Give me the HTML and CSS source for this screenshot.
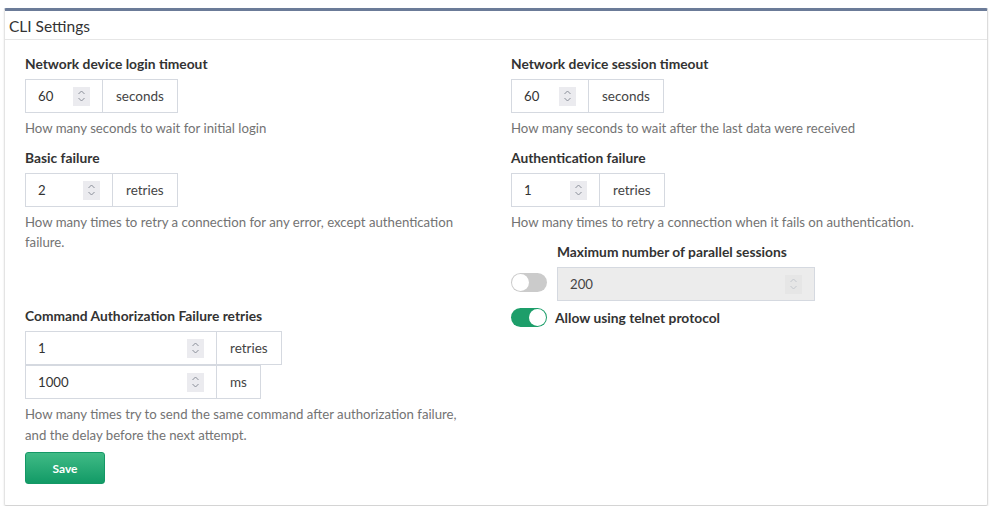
FILE: index.html
```html
<!DOCTYPE html>
<html>
<head>
<meta charset="utf-8">
<link rel="stylesheet" href="styles.css">
</head>
<body>
<div class="card">
  <div class="card-header">CLI Settings</div>
  <div class="card-body">
    <div class="col">
      <div class="field">
        <div class="label">Network device login timeout</div>
        <div class="igroup">
          <div class="num w78"><span>60</span><span class="spin"><svg width="9" height="14" viewBox="0 0 9 14"><path d="M1.5 5 L4.5 2 L7.5 5 M1.5 9 L4.5 12 L7.5 9" fill="none" stroke="#8a8f99" stroke-width="1"/></svg></span></div>
          <div class="addon">seconds</div>
        </div>
        <div class="help">How many seconds to wait for initial login</div>
      </div>
      <div class="field">
        <div class="label">Basic failure</div>
        <div class="igroup">
          <div class="num w88"><span>2</span><span class="spin"><svg width="9" height="14" viewBox="0 0 9 14"><path d="M1.5 5 L4.5 2 L7.5 5 M1.5 9 L4.5 12 L7.5 9" fill="none" stroke="#8a8f99" stroke-width="1"/></svg></span></div>
          <div class="addon">retries</div>
        </div>
        <div class="help">How many times to retry a connection for any error, except authentication failure.</div>
      </div>
      <div class="field spaced">
        <div class="label">Command Authorization Failure retries</div>
        <div class="igroup">
          <div class="num w192"><span>1</span><span class="spin"><svg width="9" height="14" viewBox="0 0 9 14"><path d="M1.5 5 L4.5 2 L7.5 5 M1.5 9 L4.5 12 L7.5 9" fill="none" stroke="#8a8f99" stroke-width="1"/></svg></span></div>
          <div class="addon">retries</div>
        </div>
        <div class="igroup">
          <div class="num w192"><span>1000</span><span class="spin"><svg width="9" height="14" viewBox="0 0 9 14"><path d="M1.5 5 L4.5 2 L7.5 5 M1.5 9 L4.5 12 L7.5 9" fill="none" stroke="#8a8f99" stroke-width="1"/></svg></span></div>
          <div class="addon">ms</div>
        </div>
        <div class="help last">How many times try to send the same command after authorization failure, and the delay before the next attempt.</div>
        <button class="btn">Save</button>
      </div>
    </div>
    <div class="col">
      <div class="field">
        <div class="label">Network device session timeout</div>
        <div class="igroup">
          <div class="num w78"><span>60</span><span class="spin"><svg width="9" height="14" viewBox="0 0 9 14"><path d="M1.5 5 L4.5 2 L7.5 5 M1.5 9 L4.5 12 L7.5 9" fill="none" stroke="#8a8f99" stroke-width="1"/></svg></span></div>
          <div class="addon">seconds</div>
        </div>
        <div class="help">How many seconds to wait after the last data were received</div>
      </div>
      <div class="field">
        <div class="label">Authentication failure</div>
        <div class="igroup">
          <div class="num w89"><span>1</span><span class="spin"><svg width="9" height="14" viewBox="0 0 9 14"><path d="M1.5 5 L4.5 2 L7.5 5 M1.5 9 L4.5 12 L7.5 9" fill="none" stroke="#8a8f99" stroke-width="1"/></svg></span></div>
          <div class="addon">retries</div>
        </div>
        <div class="help">How many times to retry a connection when it fails on authentication.</div>
      </div>
      <div class="parallel">
        <div class="toggle"><span class="knob"></span></div>
        <div class="pfield">
          <div class="label">Maximum number of parallel sessions</div>
          <div class="num disabled"><span>200</span><span class="spin"><svg width="9" height="14" viewBox="0 0 9 14"><path d="M1.5 5 L4.5 2 L7.5 5 M1.5 9 L4.5 12 L7.5 9" fill="none" stroke="#c4c8ce" stroke-width="1"/></svg></span></div>
        </div>
      </div>
      <div class="telnet">
        <div class="toggle on"><span class="knob"></span></div>
        <div class="tlabel">Allow using telnet protocol</div>
      </div>
    </div>
  </div>
</div>
</body>
</html>
```
FILE: styles.css
```css
* { box-sizing: border-box; }
body {
  margin: 0;
  padding: 8px 5px 0 4px;
  background: #fff;
  font-family: Lato, "Open Sans", sans-serif;
  font-size: 13.2px;
  color: #333;
}
.card {
  border-top: 3px solid #6b7b98;
  border-left: 1px solid #e4e4e4;
  border-right: 1px solid #dcdcdc;
  border-bottom: 1px solid #d4d4d4;
  border-radius: 2px;
  box-shadow: 0 1px 2px rgba(0,0,0,0.12);
  height: 498px;
}
.card-header {
  font-size: 15.5px;
  color: #333;
  padding: 6px 4px 0;
  height: 29px;
  border-bottom: 1px solid #e6e6e6;
}
.card-body {
  padding: 14px 20px 0;
  display: flex;
}
.col {
  display: flex;
  flex-direction: column;
  align-items: flex-start;
}
.col:first-child { width: 486px; padding-right: 40px; }
.col:last-child { flex: 1; padding-right: 20px; }
.label {
  font-weight: bold;
  font-size: 13.8px;
  color: #333;
  line-height: 20px;
  margin-bottom: 5px;
}
.igroup {
  display: flex;
  height: 34px;
}
.num {
  display: flex;
  align-items: center;
  justify-content: space-between;
  border: 1px solid #d5d9e0;
  padding: 0 12px 0 12px;
  color: #333;
  background: #fff;
}
.w78 { width: 78px; }
.w88 { width: 88px; }
.w89 { width: 89px; }
.w192 { width: 192px; }
.spin {
  width: 17px;
  height: 19px;
  background: #ebebef;
  display: flex;
  align-items: center;
  justify-content: center;
}
.addon {
  border: 1px solid #d5d9e0;
  border-left: none;
  display: flex;
  align-items: center;
  padding: 0 13px;
  font-size: 13.5px;
  color: #444;
  background: #fff;
}
.help {
  color: #737373;
  line-height: 20px;
  margin-top: 5px;
  margin-bottom: 10px;
}
.help.last { margin-top: 5px; margin-bottom: 5px; line-height: 21px; }
.spaced { margin-top: 44px; }
.parallel {
  display: flex;
  align-items: flex-start;
}
.toggle {
  width: 36px;
  height: 19px;
  border-radius: 10px;
  background: #cbcbcb;
  position: relative;
  flex: none;
}
.parallel .toggle { margin-top: 31px; margin-right: 10px; }
.knob {
  position: absolute;
  top: 1px;
  left: 1px;
  width: 17px;
  height: 17px;
  border-radius: 50%;
  background: #fff;
}
.toggle.on { background: #1d9e6a; }
.toggle.on .knob { left: 18px; }
.disabled {
  width: 258px;
  height: 34px;
  background: #ececec;
  color: #444;
}
.disabled .spin { background: #e6e6e6; }
.telnet {
  display: flex;
  align-items: center;
  height: 19px;
  margin-top: 7px;
}
.tlabel {
  font-weight: bold;
  font-size: 13.8px;
  margin-left: 8px;
}
.btn {
  margin-top: 1px;
  width: 80px;
  height: 32px;
  border: 1px solid #149866;
  border-radius: 3px;
  background: linear-gradient(#40bb86, #129a66);
  color: #fff;
  font-family: Lato, sans-serif;
  font-weight: bold;
  font-size: 12px;
}
```
